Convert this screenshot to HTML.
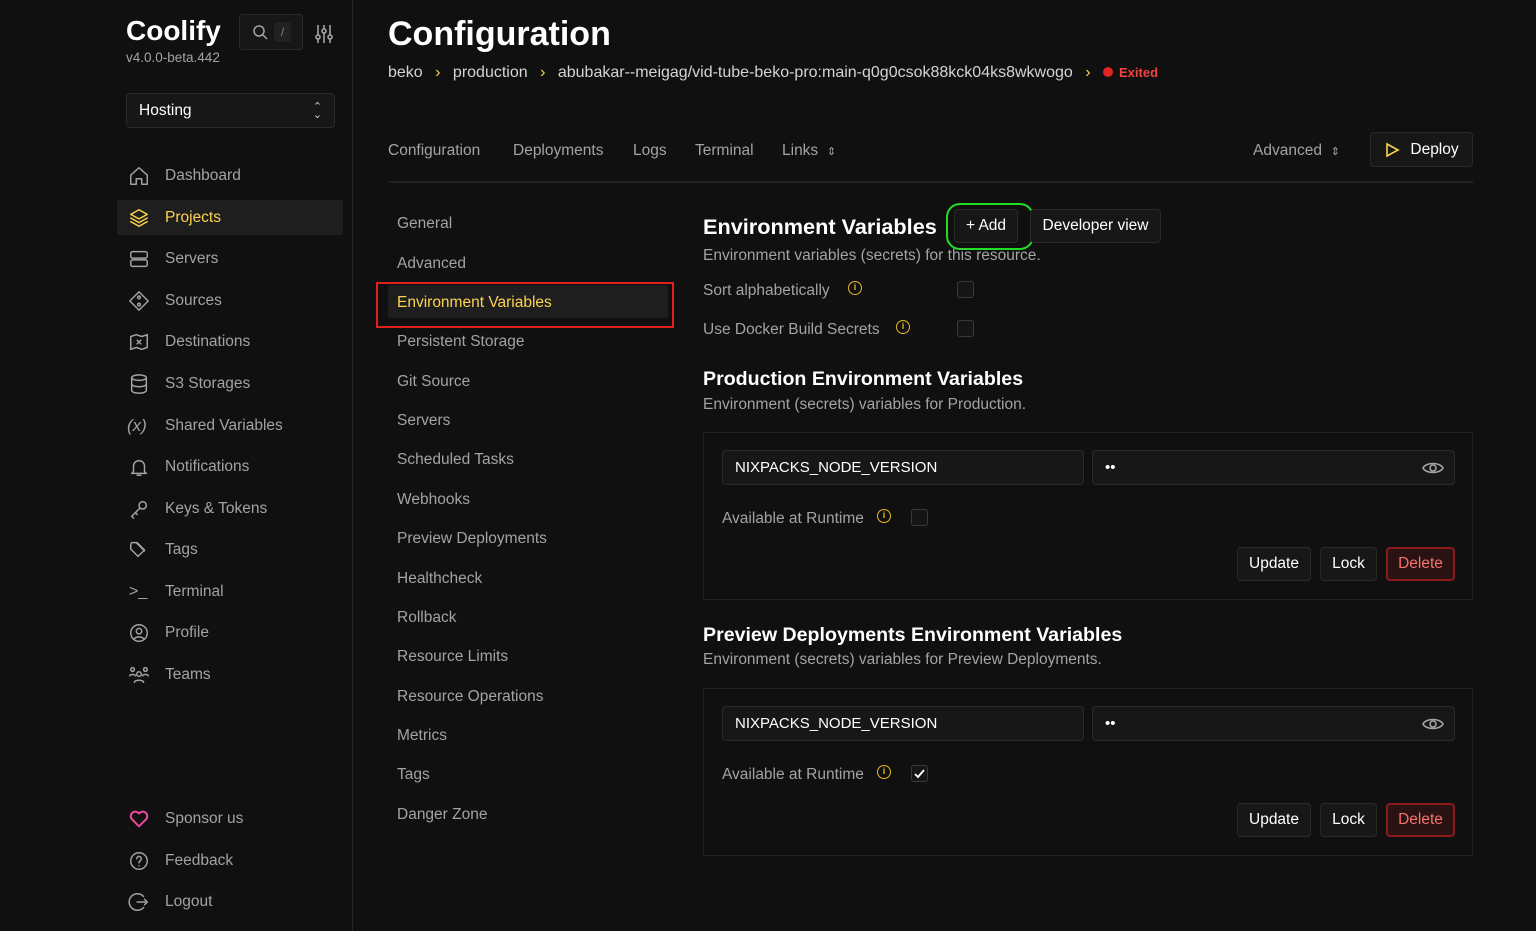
<!DOCTYPE html>
<html><head><meta charset="utf-8"><style>
*{box-sizing:border-box;margin:0;padding:0}
body{width:1536px;height:931px;background:#101010;font-family:"Liberation Sans",sans-serif;color:#d4d4d4;position:relative;overflow:hidden;font-size:15.5px}
.a{position:absolute;line-height:20px;white-space:nowrap}
.side{position:absolute;left:0;top:0;width:353px;height:931px;border-right:1px solid #242424}
.nav{color:#a3a3a3;font-size:15.5px}
.ic{position:absolute;width:22px;height:22px}
.ic svg{width:22px;height:22px;fill:none;stroke:#a3a3a3;stroke-width:1.6;stroke-linecap:round;stroke-linejoin:round}
.sub{color:#a3a3a3;font-size:15.5px;left:397px}
.btn{position:absolute;background:#171717;border:1px solid #2a2a2a;border-radius:4px;color:#fff;font-size:15.5px;display:flex;align-items:center;justify-content:center}
.inp{position:absolute;background:#171717;border:1px solid #2a2a2a;border-radius:4px;color:#fff;font-size:15px;padding-left:12px;display:flex;align-items:center}
.cb{position:absolute;width:17px;height:17px;border:1px solid #3a3a3a;border-radius:3px;background:#151515}
.info{position:absolute;width:14px;height:14px;border:1.6px solid #e8b923;border-radius:50%;color:#e8b923;font-size:9px;font-weight:bold;text-align:center;line-height:11px}
.box{position:absolute;border:1px solid #222;left:703px;width:770px}
.muted{color:#a3a3a3}
</style></head><body>
<div class="side"></div>
<div class="a" style="left:126px;top:16px;font-size:28px;font-weight:bold;color:#fff;line-height:30px">Coolify</div>
<div class="a muted" style="left:126px;top:48px;font-size:13.5px">v4.0.0-beta.442</div>
<div class="btn" style="left:239px;top:14px;width:64px;height:36px;justify-content:flex-start;padding-left:12px">
<svg width="16" height="16" viewBox="0 0 16 16" fill="none" stroke="#a3a3a3" stroke-width="1.5"><circle cx="7" cy="7" r="5"/><path d="M11 11l4 4"/></svg>
<span style="margin-left:6px;background:#222;width:17px;height:20px;border-radius:3px;color:#888;font-size:12px;text-align:center;line-height:20px">/</span></div>
<svg style="position:absolute;left:315px;top:24px" width="18" height="20" viewBox="0 0 18 20" fill="none" stroke="#a3a3a3" stroke-width="1.6"><path d="M3 1v18M9 1v18M15 1v18"/><circle cx="3" cy="13" r="2" fill="#101010"/><circle cx="9" cy="7" r="2" fill="#101010"/><circle cx="15" cy="13" r="2" fill="#101010"/></svg>
<div class="btn" style="left:126px;top:93px;width:209px;height:35px;justify-content:space-between;padding:0 12px"><span>Hosting</span><span style="color:#ccc;font-size:11px;line-height:8px;text-align:center">⌃<br>⌄</span></div>
<div style="position:absolute;left:117px;top:200px;width:226px;height:35px;background:#1e1e1e"></div>

<div class="ic" style="left:128px;top:165px"><svg viewBox="0 0 24 24"><path d="M3 11l9-8 9 8v10h-6v-6H9v6H3z"/></svg></div>
<div class="a nav" style="left:165px;top:166px">Dashboard</div>
<div class="ic" style="left:128px;top:207px"><svg viewBox="0 0 24 24" style="stroke:#fcd34d"><path d="M12 3l9 5-9 5-9-5z M3 12l9 5 9-5 M3 16l9 5 9-5"/></svg></div>
<div class="a nav" style="left:165px;top:208px;color:#fcd34d">Projects</div>
<div class="ic" style="left:128px;top:248px"><svg viewBox="0 0 24 24"><rect x="3" y="4" width="18" height="7" rx="2"/><rect x="3" y="13" width="18" height="7" rx="2"/></svg></div>
<div class="a nav" style="left:165px;top:249px">Servers</div>
<div class="ic" style="left:128px;top:290px"><svg viewBox="0 0 24 24"><path d="M12 2l10 10-10 10L2 12z"/><circle cx="12" cy="8" r="1.5"/><circle cx="12" cy="16" r="1.5"/></svg></div>
<div class="a nav" style="left:165px;top:291px">Sources</div>
<div class="ic" style="left:128px;top:331px"><svg viewBox="0 0 24 24"><path d="M3 6l6-2 6 2 6-2v14l-6 2-6-2-6 2z M10 10l4 4M14 10l-4 4"/></svg></div>
<div class="a nav" style="left:165px;top:332px">Destinations</div>
<div class="ic" style="left:128px;top:373px"><svg viewBox="0 0 24 24"><ellipse cx="12" cy="5" rx="8" ry="3"/><path d="M4 5v14c0 1.7 3.6 3 8 3s8-1.3 8-3V5M4 12c0 1.7 3.6 3 8 3s8-1.3 8-3"/></svg></div>
<div class="a nav" style="left:165px;top:374px">S3 Storages</div>
<div class="a nav" style="left:127px;top:416px;font-size:17px;font-style:italic">(x)</div>
<div class="a nav" style="left:165px;top:416px">Shared Variables</div>
<div class="ic" style="left:128px;top:456px"><svg viewBox="0 0 24 24"><path d="M6 17V11a6 6 0 0112 0v6l2 2H4z M10 21h4"/></svg></div>
<div class="a nav" style="left:165px;top:457px">Notifications</div>
<div class="ic" style="left:128px;top:498px"><svg viewBox="0 0 24 24"><circle cx="16" cy="8" r="4"/><path d="M13 11l-9 9 2 2 M8 16l2 2"/></svg></div>
<div class="a nav" style="left:165px;top:499px">Keys &amp; Tokens</div>
<div class="ic" style="left:128px;top:539px"><svg viewBox="0 0 24 24"><path d="M3 6v5l8 8 7-7-8-8H4z M9 4l9 9"/></svg></div>
<div class="a nav" style="left:165px;top:540px">Tags</div>
<div class="a nav" style="left:129px;top:582px;font-size:16px">&gt;_</div>
<div class="a nav" style="left:165px;top:582px">Terminal</div>
<div class="ic" style="left:128px;top:622px"><svg viewBox="0 0 24 24"><circle cx="12" cy="12" r="9"/><circle cx="12" cy="10" r="3"/><path d="M6.5 18.5c3-3 8-3 11 0"/></svg></div>
<div class="a nav" style="left:165px;top:623px">Profile</div>
<div class="ic" style="left:128px;top:664px"><svg viewBox="0 0 24 24"><circle cx="12" cy="11" r="2.5"/><circle cx="5" cy="6" r="2"/><circle cx="19" cy="6" r="2"/><path d="M7 20c0-3 10-3 10 0M2 13c0-2 6-2 6 0M16 13c0-2 6-2 6 0"/></svg></div>
<div class="a nav" style="left:165px;top:665px">Teams</div>
<div class="ic" style="left:128px;top:808px"><svg viewBox="0 0 24 24" style="stroke:#ec4899;stroke-width:2.2"><path d="M12 20l-8-8a5 5 0 018-6 5 5 0 018 6z"/></svg></div>
<div class="a nav" style="left:165px;top:809px">Sponsor us</div>
<div class="ic" style="left:128px;top:850px"><svg viewBox="0 0 24 24"><circle cx="12" cy="12" r="9"/><path d="M9.5 9.5a2.5 2.5 0 114 2c-1 .6-1.5 1-1.5 2.5M12 17v.1"/></svg></div>
<div class="a nav" style="left:165px;top:851px">Feedback</div>
<div class="ic" style="left:128px;top:891px"><svg viewBox="0 0 24 24"><path d="M17 6a9 9 0 100 12M10 12h11M18 9l3 3-3 3"/></svg></div>
<div class="a nav" style="left:165px;top:892px">Logout</div>

<div class="a" style="left:388px;top:16px;font-size:34px;font-weight:bold;color:#fff;line-height:36px">Configuration</div>
<div class="a" style="left:388px;top:63px;color:#d4d4d4;font-size:16px">beko <span style="color:#fcd34d;margin:0 8px">›</span> production <span style="color:#fcd34d;margin:0 8px">›</span> abubakar--meigag/vid-tube-beko-pro:main-q0g0csok88kck04ks8wkwogo <span style="color:#fcd34d;margin:0 8px">›</span> <span style="display:inline-block;width:10px;height:10px;border-radius:50%;background:#dc2626;margin-right:6px"></span><span style="color:#ef4444;font-size:13px;font-weight:bold">Exited</span></div>
<div class="a muted" style="left:388px;top:141px">Configuration</div>
<div class="a muted" style="left:513px;top:141px">Deployments</div>
<div class="a muted" style="left:633px;top:141px">Logs</div>
<div class="a muted" style="left:695px;top:141px">Terminal</div>
<div class="a muted" style="left:782px;top:141px">Links &nbsp;<span style="font-size:11px">⇕</span></div>
<div class="a muted" style="left:1253px;top:141px">Advanced &nbsp;<span style="font-size:11px">⇕</span></div>
<div class="btn" style="left:1370px;top:132px;width:103px;height:35px"><svg width="16" height="16" viewBox="0 0 16 16" fill="none" stroke="#fcd34d" stroke-width="1.6"><path d="M3 2l11 6-11 6z"/></svg><span style="margin-left:10px">Deploy</span></div>
<div style="position:absolute;left:388px;top:181px;width:1085px;height:2px;background:#222"></div>

<div class="a sub" style="top:214px">General</div>
<div class="a sub" style="top:254px">Advanced</div>
<div style="position:absolute;left:388px;top:285px;width:280px;height:33px;background:#1e1e1e"></div>
<div style="position:absolute;left:376px;top:282px;width:298px;height:46px;border:2px solid #e0201b"></div>
<div class="a sub" style="top:293px;color:#fcd34d">Environment Variables</div>
<div class="a sub" style="top:332px">Persistent Storage</div>
<div class="a sub" style="top:372px">Git Source</div>
<div class="a sub" style="top:411px">Servers</div>
<div class="a sub" style="top:450px">Scheduled Tasks</div>
<div class="a sub" style="top:490px">Webhooks</div>
<div class="a sub" style="top:529px">Preview Deployments</div>
<div class="a sub" style="top:569px">Healthcheck</div>
<div class="a sub" style="top:608px">Rollback</div>
<div class="a sub" style="top:647px">Resource Limits</div>
<div class="a sub" style="top:687px">Resource Operations</div>
<div class="a sub" style="top:726px">Metrics</div>
<div class="a sub" style="top:765px">Tags</div>
<div class="a sub" style="top:805px">Danger Zone</div>

<div class="a" style="left:703px;top:214px;font-size:21.7px;font-weight:bold;color:#fff;line-height:26px">Environment Variables</div>
<div class="btn" style="left:954px;top:209px;width:64px;height:34px">+ Add</div>
<div style="position:absolute;left:946px;top:203px;width:88px;height:47px;border:2px solid #22dd22;border-radius:14px"></div>
<div class="btn" style="left:1030px;top:209px;width:131px;height:34px">Developer view</div>
<div class="a muted" style="left:703px;top:246px">Environment variables (secrets) for this resource.</div>
<div class="a muted" style="left:703px;top:281px">Sort alphabetically</div>
<div class="info" style="left:848px;top:281px">i</div>
<div class="cb" style="left:957px;top:281px"></div>
<div class="a muted" style="left:703px;top:320px">Use Docker Build Secrets</div>
<div class="info" style="left:896px;top:320px">i</div>
<div class="cb" style="left:957px;top:320px"></div>

<div class="a" style="left:703px;top:367px;font-size:19.6px;font-weight:bold;color:#fff;line-height:24px">Production Environment Variables</div>
<div class="a muted" style="left:703px;top:395px">Environment (secrets) variables for Production.</div>
<div class="box" style="top:432px;height:168px"></div>
<div class="inp" style="left:722px;top:450px;width:362px;height:35px">NIXPACKS_NODE_VERSION</div>
<div class="inp" style="left:1092px;top:450px;width:363px;height:35px">••</div>
<svg style="position:absolute;left:1422px;top:459px" width="22" height="18" viewBox="0 0 22 18" fill="none" stroke="#a3a3a3" stroke-width="1.6"><path d="M1 9c3-6 17-6 20 0-3 6-17 6-20 0z"/><circle cx="11" cy="9" r="3"/></svg>
<div class="a muted" style="left:722px;top:509px">Available at Runtime</div>
<div class="info" style="left:877px;top:509px">i</div>
<div class="cb" style="left:911px;top:509px"></div>
<div class="btn" style="left:1237px;top:547px;width:74px;height:34px">Update</div>
<div class="btn" style="left:1320px;top:547px;width:57px;height:34px">Lock</div>
<div class="btn" style="left:1386px;top:547px;width:69px;height:34px;background:#2a1212;border:2px solid #8b1a1a;color:#f87171">Delete</div>

<div class="a" style="left:703px;top:623px;font-size:19.6px;font-weight:bold;color:#fff;line-height:24px">Preview Deployments Environment Variables</div>
<div class="a muted" style="left:703px;top:650px">Environment (secrets) variables for Preview Deployments.</div>
<div class="box" style="top:688px;height:168px"></div>
<div class="inp" style="left:722px;top:706px;width:362px;height:35px">NIXPACKS_NODE_VERSION</div>
<div class="inp" style="left:1092px;top:706px;width:363px;height:35px">••</div>
<svg style="position:absolute;left:1422px;top:715px" width="22" height="18" viewBox="0 0 22 18" fill="none" stroke="#a3a3a3" stroke-width="1.6"><path d="M1 9c3-6 17-6 20 0-3 6-17 6-20 0z"/><circle cx="11" cy="9" r="3"/></svg>
<div class="a muted" style="left:722px;top:765px">Available at Runtime</div>
<div class="info" style="left:877px;top:765px">i</div>
<div class="cb" style="left:911px;top:765px"><svg width="15" height="15" viewBox="0 0 15 15" fill="none" stroke="#fff" stroke-width="1.8"><path d="M3 8l3 3 6-7"/></svg></div>
<div class="btn" style="left:1237px;top:803px;width:74px;height:34px">Update</div>
<div class="btn" style="left:1320px;top:803px;width:57px;height:34px">Lock</div>
<div class="btn" style="left:1386px;top:803px;width:69px;height:34px;background:#2a1212;border:2px solid #8b1a1a;color:#f87171">Delete</div>
</body></html>
